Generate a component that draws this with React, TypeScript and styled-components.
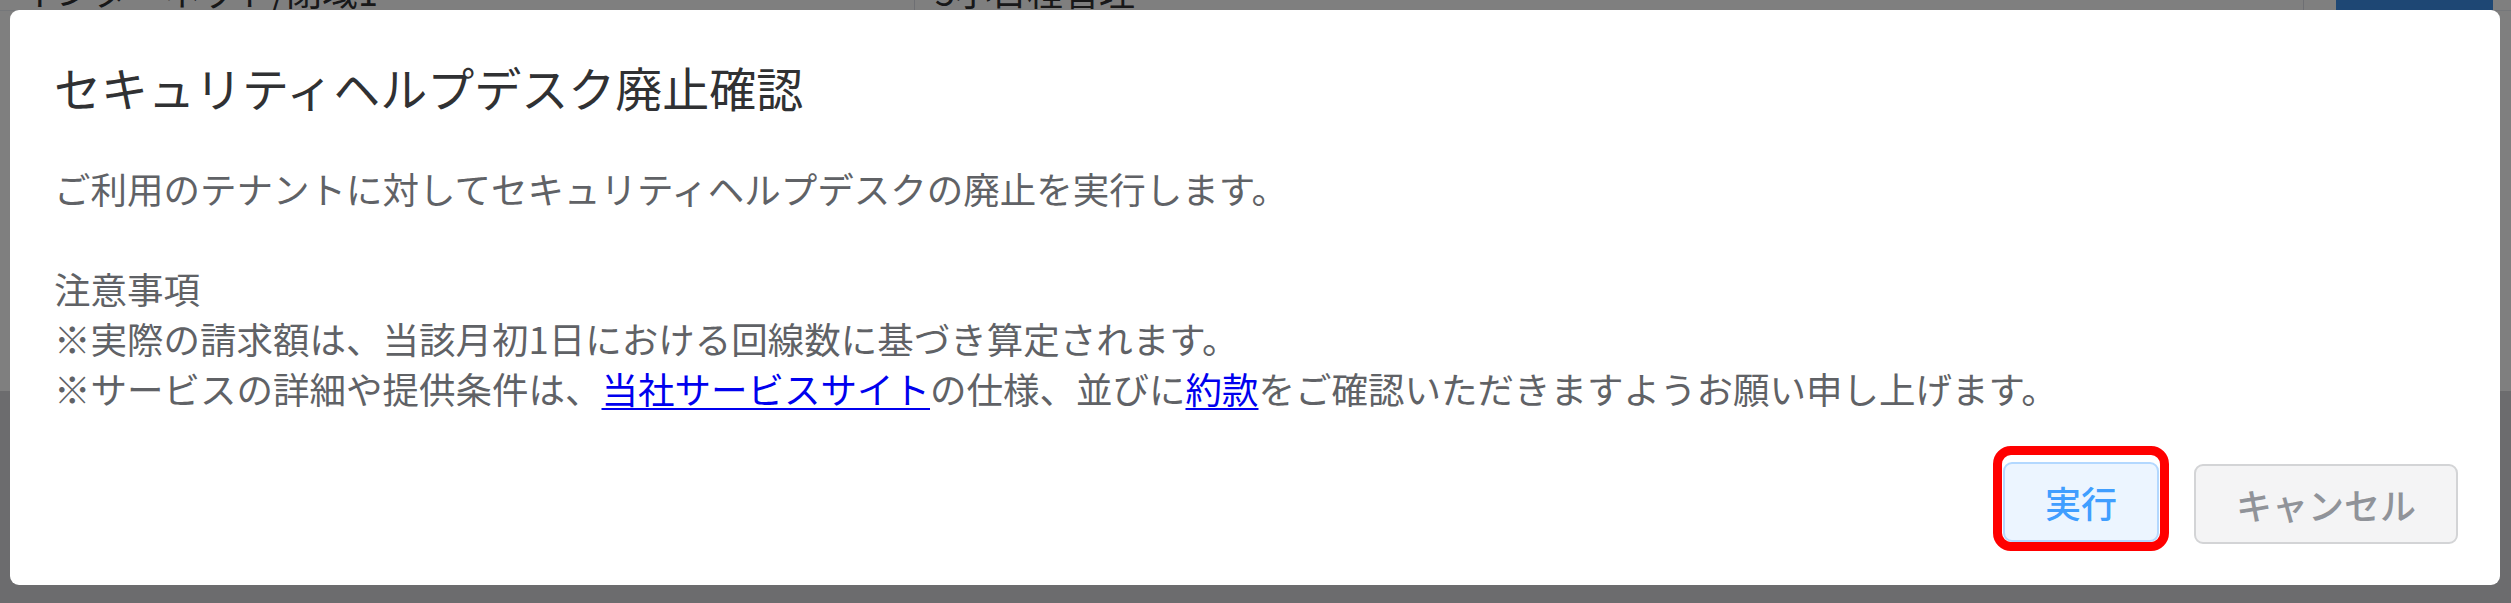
import styled, { createGlobalStyle } from "styled-components";

const GlobalStyle = createGlobalStyle`
  html, body {
    margin: 0;
    padding: 0;
  }
  body {
    font-family: "Noto Sans CJK JP", "Noto Sans", sans-serif;
    overflow: hidden;
  }
`;

const Page = styled.div`
  width: 2511px;
  height: 603px;
  background: #d8d9dd;
  overflow: hidden;
`;

const TableRow = styled.div`
  display: flex;
  align-items: flex-end;
  height: 10px;
  overflow: hidden;
  background: #ffffff;
  border-bottom: 1px solid #ebeef5;
`;

interface CellProps {
  width: number;
}

const Cell = styled.div<CellProps>`
  flex: 0 0 ${(p) => p.width}px;
  display: flex;
  align-items: flex-end;
  height: 100%;
  padding-left: 20px;
  padding-bottom: 2px;
  box-sizing: border-box;
  border-right: 1px solid #dcdfe6;
  font-size: 36px;
  line-height: 1;
  color: #303133;
  white-space: nowrap;
`;

const BlueButton = styled.div`
  width: 157px;
  height: 100%;
  margin-left: 32px;
  background: #3d8ee8;
`;

const TableBody = styled.div`
  height: 380px;
  background: #ffffff;
`;

const Overlay = styled.div`
  position: fixed;
  inset: 0;
  background: rgba(0, 0, 0, 0.5);
  padding: 10px 0 0 10px;
`;

const Dialog = styled.div`
  width: 2490px;
  height: 575px;
  box-sizing: border-box;
  background: #ffffff;
  border-radius: 9px;
  display: flex;
  flex-direction: column;
`;

const Header = styled.div`
  padding: 46px 44px 26px;
`;

const Title = styled.h2`
  margin: 0;
  font-size: 47px;
  line-height: 62px;
  font-weight: 400;
  color: #303133;
`;

const Body = styled.div`
  padding: 20px 44px 0;
  font-size: 36.5px;
  line-height: 50px;
  color: #606266;
`;

const Line = styled.div`
  min-height: 50px;
  white-space: nowrap;
`;

const TextLink = styled.a`
  color: #0000ee;
  text-decoration: underline;
  text-underline-offset: 4px;
  text-decoration-thickness: 2px;
`;

const Footer = styled.div`
  margin-top: auto;
  display: flex;
  justify-content: flex-end;
  align-items: center;
  gap: 25px;
  padding: 0 42px 34px;
`;

const Highlight = styled.div`
  display: flex;
  padding: 7px 1px 0;
  border: 9px solid #ff0000;
  border-radius: 18px;
`;

interface ButtonProps {
  variant: "primary" | "info";
}

const Button = styled.button<ButtonProps>`
  height: 80px;
  padding: 0 40px;
  border-radius: 9px;
  border: 2px solid ${(p) => (p.variant === "primary" ? "#b3d8ff" : "#d3d4d6")};
  background: ${(p) => (p.variant === "primary" ? "#ecf5ff" : "#f4f4f5")};
  color: ${(p) => (p.variant === "primary" ? "#409eff" : "#909399")};
  font-family: "Noto Sans CJK JP", "Noto Sans", sans-serif;
  font-size: 36px;
  font-weight: 500;
  line-height: 1;
  cursor: pointer;
`;

const CancelButton = styled(Button)`
  margin-top: 10px;
`;

const App = () => {
  return (
    <>
      <GlobalStyle />
      <Page>
        <TableRow>
          <Cell width={915}>インターネット/閉域1</Cell>
          <Cell width={1389}>5小日程管理</Cell>
          <BlueButton />
        </TableRow>
        <TableBody />
      </Page>
      <Overlay>
        <Dialog>
          <Header>
            <Title>セキュリティヘルプデスク廃止確認</Title>
          </Header>
          <Body>
            <Line>ご利用のテナントに対してセキュリティヘルプデスクの廃止を実行します。</Line>
            <Line />
            <Line>注意事項</Line>
            <Line>※実際の請求額は、当該月初1日における回線数に基づき算定されます。</Line>
            <Line>
              ※サービスの詳細や提供条件は、
              <TextLink href="#">当社サービスサイト</TextLink>
              の仕様、並びに<TextLink href="#">約款</TextLink>
              をご確認いただきますようお願い申し上げます。
            </Line>
          </Body>
          <Footer>
            <Highlight>
              <Button variant="primary">実行</Button>
            </Highlight>
            <CancelButton variant="info">キャンセル</CancelButton>
          </Footer>
        </Dialog>
      </Overlay>
    </>
  );
};

export default App;
